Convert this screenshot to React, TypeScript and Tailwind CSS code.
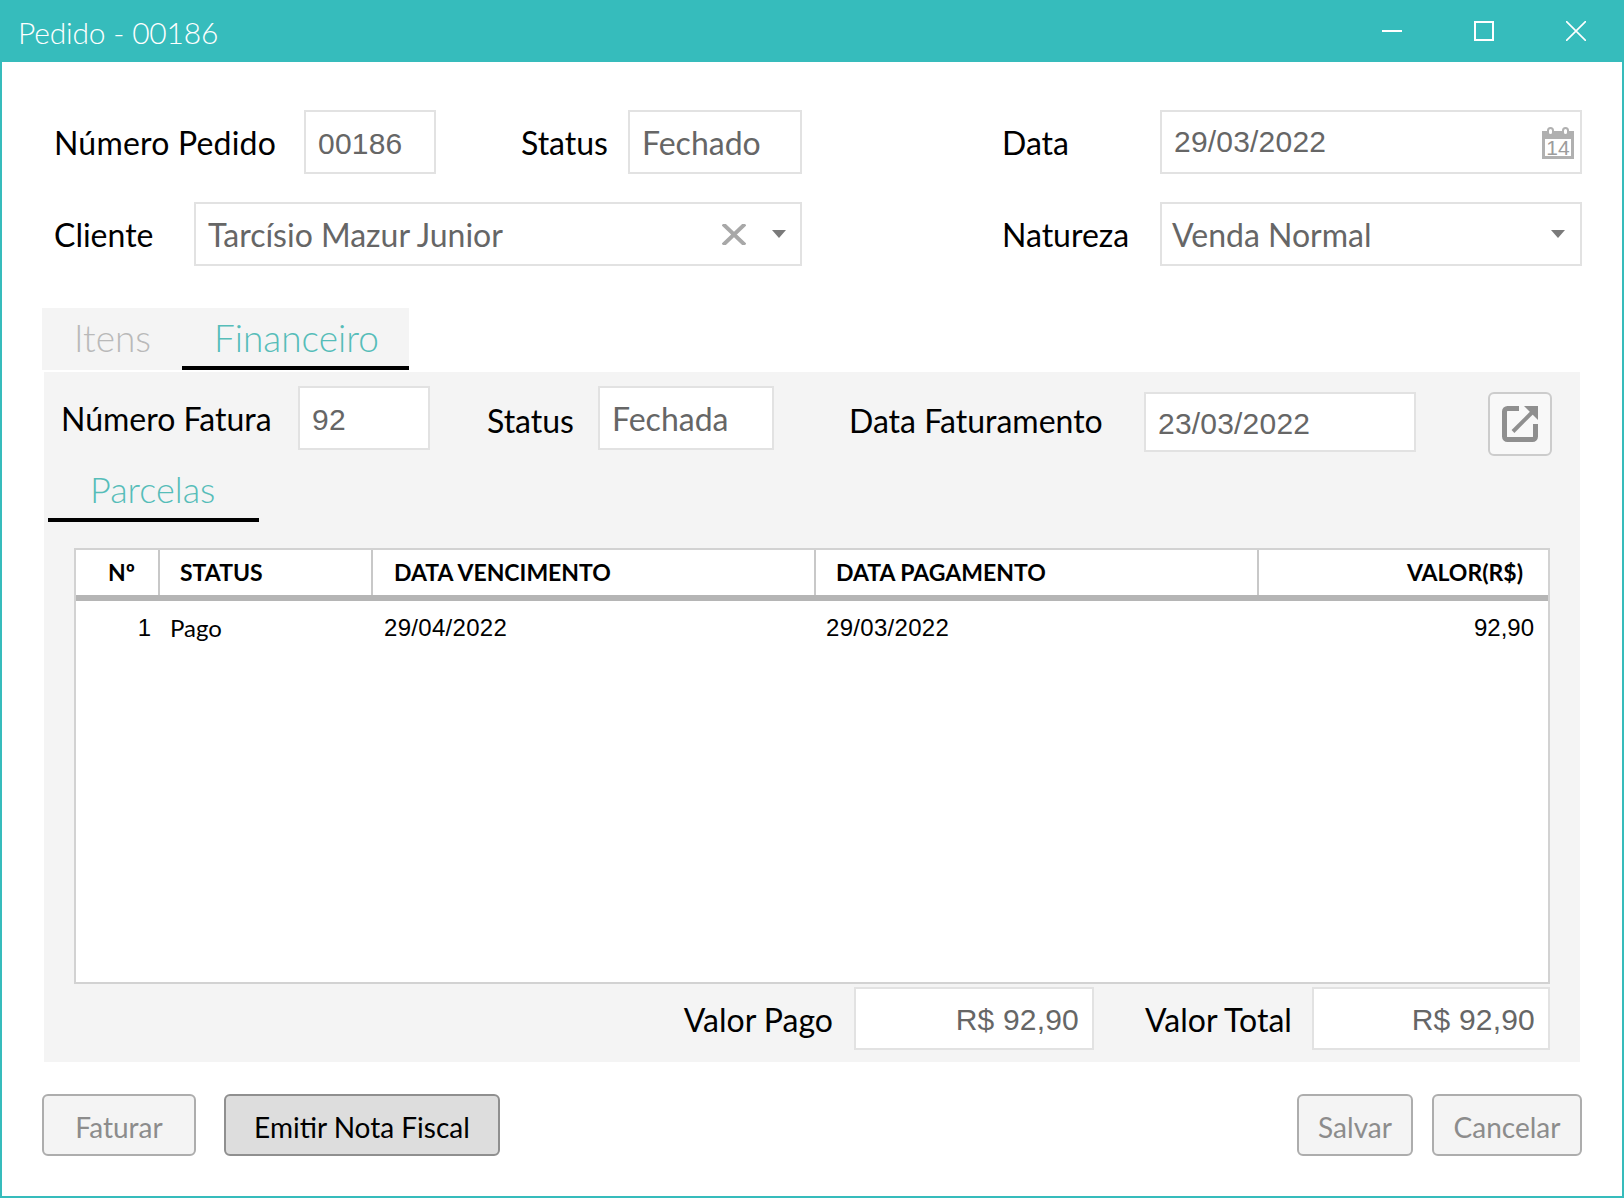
import React from 'react';

const field = 'flex items-center border-2 border-[#e2e2e2] bg-white text-[#666666] shrink-0 pt-[2px]';
const numeric = "font-['Liberation_Sans',sans-serif] text-[30px] tracking-[0.2px]";
const disabledBtn = 'flex items-center justify-center h-[62px] pt-[4px] rounded-[6px] border-2 border-[#adadad] bg-[#f4f4f4] text-[#8c8c8c] text-[28px] shrink-0';

function Caret() {
  return (
    <svg width="14" height="8" viewBox="0 0 14 8" className="shrink-0">
      <path d="M0 0H14L7 8Z" fill="#7a7a7a" />
    </svg>
  );
}

function CalendarIcon() {
  return (
    <svg width="32" height="32" viewBox="0 0 32 32" className="shrink-0">
      <rect x="0" y="4" width="32" height="28" fill="#b0b0b0" />
      <rect x="3" y="12" width="26" height="17" fill="#ffffff" />
      <rect x="6" y="1" width="5" height="7" rx="2.5" fill="#ffffff" stroke="#b0b0b0" strokeWidth="2" />
      <rect x="21" y="1" width="5" height="7" rx="2.5" fill="#ffffff" stroke="#b0b0b0" strokeWidth="2" />
      <text x="16" y="28" textAnchor="middle" fontSize="21" fontFamily="Liberation Sans" fill="#9c9c9c">14</text>
    </svg>
  );
}

function ExternalIcon() {
  return (
    <svg width="36" height="36" viewBox="0 0 36 36" fill="none" stroke="#8f8f8f">
      <path d="M17 2.5H5.5a3 3 0 0 0-3 3v25a3 3 0 0 0 3 3h25a3 3 0 0 0 3-3V18" strokeWidth="5" />
      <path d="M11 25.5L32 4.5" strokeWidth="4" />
      <path d="M22 0H36V14Z" fill="#8f8f8f" stroke="none" />
    </svg>
  );
}

export default function App() {
  return (
    <div className="w-[1624px] h-[1198px] flex flex-col bg-white text-black font-['Lato','Noto_Sans',sans-serif] overflow-hidden">
      {/* barra de titulo */}
      <div className="h-[62px] bg-[#36bcbc] flex items-center shrink-0 text-white">
        <span className="ml-[18px] pt-[2px] text-[30px] font-light tracking-[-0.2px]">Pedido - 00186</span>
        <div className="ml-auto flex items-center">
          <div className="w-5 h-[2px] bg-white" />
          <div className="ml-[72px] w-5 h-5 border-2 border-white" />
          <svg width="20" height="20" viewBox="0 0 20 20" className="ml-[72px] mr-[38px]" stroke="#ffffff" strokeWidth="1.6">
            <path d="M0 0L20 20M20 0L0 20" />
          </svg>
        </div>
      </div>

      <div className="flex-1 flex flex-col border-x-2 border-b-2 border-[#36bcbc]">
        {/* cabecalho do pedido */}
        <div className="flex items-center mt-[48px] h-[64px] text-[32px]">
          <span className="ml-[52px] w-[250px] pt-[2px] tracking-[0.2px]">Número Pedido</span>
          <div className={`${field} ${numeric} w-[132px] h-full pl-[12px]`}>00186</div>
          <span className="ml-[85px] w-[107px] pt-[2px]">Status</span>
          <div className={`${field} w-[174px] h-full pl-[12px]`}>Fechado</div>
          <span className="ml-[200px] w-[158px] pt-[2px]">Data</span>
          <div className={`${field} w-[422px] h-full pl-[12px] pr-[6px] justify-between`}>
            <span className={`${numeric} -mt-[4px]`}>29/03/2022</span>
            <CalendarIcon />
          </div>
        </div>
        <div className="flex items-center mt-[28px] h-[64px] text-[32px]">
          <span className="ml-[52px] w-[140px] pt-[2px]">Cliente</span>
          <div className={`${field} w-[608px] h-full pl-[12px] pr-[14px]`}>
            <span>Tarcísio Mazur Junior</span>
            <svg width="24" height="21" viewBox="0 0 24 21" className="ml-auto -mt-[2px]" stroke="#a8a8a8" strokeWidth="4">
              <path d="M1 0L23 21M23 0L1 21" />
            </svg>
            <div className="ml-[26px] -mt-[2px] flex"><Caret /></div>
          </div>
          <span className="ml-[200px] w-[158px] pt-[2px]">Natureza</span>
          <div className={`${field} w-[422px] h-full pl-[10px] pr-[15px] justify-between`}>
            <span>Venda Normal</span>
            <div className="-mt-[2px] flex"><Caret /></div>
          </div>
        </div>

        {/* abas */}
        <div className="flex mt-[42px] ml-[40px] w-[367px] h-[62px] bg-[#f4f4f4] text-[37px] font-light shrink-0">
          <div className="w-[140px] pl-[32px] pt-[2px] text-[#b9b9b9]">Itens</div>
          <div className="w-[227px] pl-[32px] pt-[2px] border-b-4 border-black text-[#56bdb9]">Financeiro</div>
        </div>

        <div className="mt-[2px] ml-[42px] w-[1536px] h-[690px] bg-[#f4f4f4] flex flex-col shrink-0">
          <div className="flex items-start mt-[14px] text-[32px]">
            <span className="ml-[17px] w-[237px] h-[64px] pt-[2px] flex items-center">Número Fatura</span>
            <div className={`${field} ${numeric} w-[132px] h-[64px] pl-[12px]`}>92</div>
            <span className="ml-[57px] w-[111px] h-[68px] pt-[2px] flex items-center">Status</span>
            <div className={`${field} w-[176px] h-[64px] pl-[12px]`}>Fechada</div>
            <span className="ml-[75px] w-[295px] h-[70px] flex items-center">Data Faturamento</span>
            <div className={`${field} ${numeric} w-[272px] h-[60px] mt-[6px] pl-[12px]`}>23/03/2022</div>
            <button className="ml-[72px] mt-[6px] w-[64px] h-[64px] flex items-center justify-center rounded-[6px] border-2 border-[#cccccc] bg-[#f8f8f8]">
              <ExternalIcon />
            </button>
          </div>

          <div className="mt-[4px] ml-[4px] w-[211px] h-[62px] pt-[2px] border-b-4 border-black text-[#56bdb9] text-[36px] font-light pl-[42px] shrink-0">
            Parcelas
          </div>

          {/* tabela de parcelas */}
          <div className="mt-[26px] ml-[30px] w-[1476px] h-[436px] border-2 border-[#d2d2d2] bg-white flex flex-col shrink-0">
            <div className="flex h-[51px] border-b-[6px] border-[#b5b5b5] text-[23px] font-bold shrink-0">
              <div className="w-[84px] border-r-2 border-[#c8c8c8] flex items-center pl-[32px]">Nº</div>
              <div className="w-[213px] border-r-2 border-[#c8c8c8] flex items-center pl-[20px]">STATUS</div>
              <div className="w-[443px] border-r-2 border-[#c8c8c8] flex items-center pl-[21px]">DATA VENCIMENTO</div>
              <div className="w-[443px] border-r-2 border-[#c8c8c8] flex items-center pl-[20px]">DATA PAGAMENTO</div>
              <div className="flex-1 flex items-center justify-end pr-[25px]">VALOR(R$)</div>
            </div>
            <div className="flex h-[54px] items-center text-[24px]">
              <div className="w-[75px] text-right font-['Liberation_Sans',sans-serif]">1</div>
              <div className="w-[213px] pl-[19px]">Pago</div>
              <div className="w-[443px] pl-[20px] font-['Liberation_Sans',sans-serif] tracking-[0.3px]">29/04/2022</div>
              <div className="w-[443px] pl-[19px] font-['Liberation_Sans',sans-serif] tracking-[0.3px]">29/03/2022</div>
              <div className="flex-1 text-right pr-[14px] font-['Liberation_Sans',sans-serif]">92,90</div>
            </div>
          </div>

          <div className="flex justify-end items-center mt-[3px] mr-[30px] h-[63px] text-[32px]">
            <span className="mr-[21px] pt-[2px]">Valor Pago</span>
            <div className={`${field} ${numeric} w-[240px] h-full justify-end pr-[13px]`}>R$ 92,90</div>
            <span className="w-[218px] pl-[51px] pt-[2px]">Valor Total</span>
            <div className={`${field} ${numeric} w-[238px] h-full justify-end pr-[13px]`}>R$ 92,90</div>
          </div>
        </div>

        {/* botoes */}
        <div className="flex mt-[32px] ml-[40px] w-[1540px]">
          <button className={`${disabledBtn} w-[154px]`}>Faturar</button>
          <button className="ml-[28px] w-[276px] h-[62px] pt-[4px] flex items-center justify-center rounded-[6px] border-2 border-[#8f8f8f] bg-[#dddddd] text-[28px] shrink-0">
            Emitir Nota Fiscal
          </button>
          <button className={`${disabledBtn} ml-auto w-[116px]`}>Salvar</button>
          <button className={`${disabledBtn} ml-[19px] w-[150px]`}>Cancelar</button>
        </div>
      </div>
    </div>
  );
}
